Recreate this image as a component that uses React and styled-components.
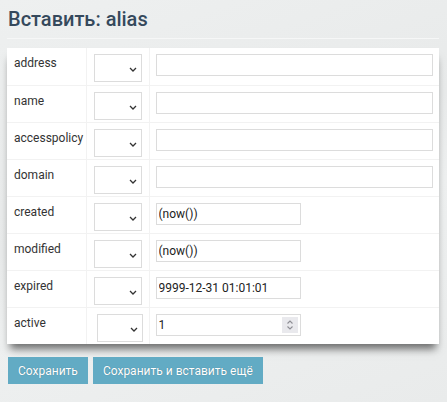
import React from "react"
import styled, { createGlobalStyle } from "styled-components"

const GlobalStyle = createGlobalStyle`
  html, body {
    margin: 0;
    padding: 0;
  }
  body {
    width: 447px;
    height: 402px;
    overflow: hidden;
    font-family: Roboto, "Liberation Sans", sans-serif;
    background: #eceeee linear-gradient(160deg, #eef0f0 0%, #e8eaea 45%, #eef0f0 60%, #e9ebeb 100%);
  }
`

const Page = styled.div`
  padding: 0 8px 0 7px;
`

const Title = styled.h1`
  margin: 0;
  padding: 5px 0 0 1px;
  height: 33px;
  font-size: 20px;
  font-weight: 500;
  color: #35495c;
  line-height: 28px;
  border-bottom: 1px solid #f6f7f7;
`

const Card = styled.div`
  margin-top: 9px;
  background: #fff;
  box-shadow: 0 8px 8px -3px rgba(0, 0, 0, 0.55);
`

const Table = styled.table`
  width: 100%;
  table-layout: fixed;
  border-collapse: collapse;
  font-size: 12px;
  color: #333;
`

const Col = styled.col`
  width: ${(p) => p.$w || "auto"};
`

const Row = styled.tr`
  height: 37px;
  border-top: ${(p) => (p.$first ? "none" : "1px solid #f2f2f2")};
`

const LabelCell = styled.td`
  padding: 8px 0 0 7px;
  vertical-align: top;
  line-height: 14px;
  border-right: 1px solid #f2f2f2;
`

const OpCell = styled.td`
  padding: 6px 0 0 ${(p) => (p.$narrow ? "10px" : "7px")};
  vertical-align: top;
  border-right: 1px solid #f2f2f2;
`

const ValueCell = styled.td`
  padding: 6px 0 0 6px;
  vertical-align: top;
`

const SelectWrap = styled.div`
  position: relative;
  width: ${(p) => (p.$narrow ? "46px" : "48px")};
  height: 28px;

  svg {
    position: absolute;
    right: 5px;
    top: 13px;
    pointer-events: none;
  }
`

const Select = styled.select`
  appearance: none;
  width: 100%;
  height: 100%;
  margin: 0;
  border: 1px solid #dcdcdc;
  background: #fff;
  box-sizing: border-box;
  outline: none;
`

const Field = styled.div`
  position: relative;
  width: ${(p) => (p.$short ? "145px" : "277px")};
  height: 22px;
`

const Input = styled.input`
  width: 100%;
  height: 100%;
  margin: 0;
  padding: 0 2px;
  box-sizing: border-box;
  border: 1px solid #dcdcdc;
  font-family: Roboto, "Liberation Sans", sans-serif;
  font-size: 12px;
  color: #222;
  outline: none;
`

const Spinner = styled.span`
  position: absolute;
  right: 3px;
  top: 3px;
  width: 16px;
  height: 16px;
  background: #e9e9ed;
  display: flex;
  align-items: center;
  justify-content: center;
`

const Actions = styled.div`
  display: flex;
  gap: 5px;
  margin-top: 13px;
  padding-left: 1px;
`

const Button = styled.button`
  height: 27px;
  padding: 0 10px;
  border: none;
  background: #62abc4;
  color: #fff;
  font-family: Roboto, "Liberation Sans", sans-serif;
  font-size: 12px;
  text-shadow: 0 0 1px rgba(0, 0, 0, 0.3);
  cursor: pointer;
`

const Chevron = () => (
  <svg width="8" height="5" viewBox="0 0 8 5">
    <path d="M1 1l3 3 3-3" fill="none" stroke="#333" strokeWidth="1.3" />
  </svg>
)

const fields = [
  { name: "address" },
  { name: "name" },
  { name: "accesspolicy" },
  { name: "domain" },
  { name: "created", value: "(now())", short: true },
  { name: "modified", value: "(now())", short: true },
  { name: "expired", value: "9999-12-31 01:01:01", short: true },
  { name: "active", value: "1", short: true, number: true },
]

const App = () => (
  <Page>
    <GlobalStyle />
    <Title>Вставить: alias</Title>
    <Card>
      <Table>
        <colgroup>
          <Col $w="79px" />
          <Col $w="63px" />
          <Col />
        </colgroup>
        <tbody>
          {fields.map((f, i) => (
            <Row key={f.name} $first={i === 0}>
              <LabelCell>{f.name}</LabelCell>
              <OpCell $narrow={f.number}>
                <SelectWrap $narrow={f.number}>
                  <Select defaultValue="">
                    <option value=""></option>
                  </Select>
                  <Chevron />
                </SelectWrap>
              </OpCell>
              <ValueCell>
                <Field $short={f.short}>
                  <Input type="text" defaultValue={f.value || ""} />
                  {f.number && (
                    <Spinner>
                      <svg width="8" height="12" viewBox="0 0 8 12">
                        <path
                          d="M1.5 4.5L4 2l2.5 2.5M1.5 7.5L4 10l2.5-2.5"
                          fill="none"
                          stroke="#8d8d94"
                          strokeWidth="1.1"
                        />
                      </svg>
                    </Spinner>
                  )}
                </Field>
              </ValueCell>
            </Row>
          ))}
        </tbody>
      </Table>
    </Card>
    <Actions>
      <Button>Сохранить</Button>
      <Button>Сохранить и вставить ещё</Button>
    </Actions>
  </Page>
)

export default App
